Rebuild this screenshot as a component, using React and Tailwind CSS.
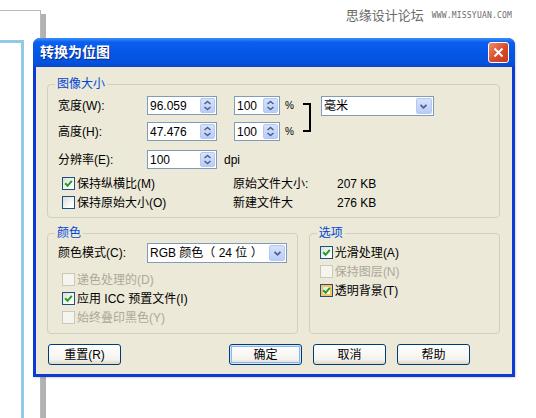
import React from "react";

const font = "font-['Liberation_Sans','Noto_Sans_CJK_SC',sans-serif]";

function Check({ checked, disabled, hover }) {
  return (
    <span
      className={`flex h-[13px] w-[13px] shrink-0 items-center justify-center border ${
        disabled
          ? "border-[#cac8bb] bg-[#f5f4ef]"
          : "border-[#1c5180] bg-[linear-gradient(135deg,#dcdcd7,#ffffff_80%)]"
      } ${hover ? "shadow-[inset_0_0_0_2px_#f9c55a] bg-[#fdf3c9]" : ""}`}
    >
      {checked && (
        <svg width="9" height="9" viewBox="0 0 9 9">
          <path d="M1.2 4.3 L3.6 6.8 L7.8 1.8" stroke="#21a121" strokeWidth="2" fill="none" />
        </svg>
      )}
    </span>
  );
}

function CheckRow({ label, hot, checked, disabled, hover }) {
  return (
    <div className="flex h-[19px] items-center gap-[2px]">
      <Check checked={checked} disabled={disabled} hover={hover} />
      <span className={disabled ? "text-[#aca899]" : "text-black"}>
        {label}
        <span>{hot}</span>
      </span>
    </div>
  );
}

function Spin() {
  return (
    <span className="flex h-[15px] w-[15px] items-center justify-center rounded-[2px] border border-[#b6c8f2] bg-[linear-gradient(180deg,#d6e2fd,#b9cdfa)]">
      <svg width="9" height="11" viewBox="0 0 9 11">
        <path d="M1.5 4 L4.5 1.5 L7.5 4" stroke="#4d6185" strokeWidth="1.6" fill="none" />
        <path d="M1.5 7 L4.5 9.5 L7.5 7" stroke="#4d6185" strokeWidth="1.6" fill="none" />
      </svg>
    </span>
  );
}

function Num({ value, w }) {
  return (
    <div className={`flex h-[19px] ${w} items-center justify-between border border-[#7f9db9] bg-white pl-[2px] pr-px`}>
      <span>{value}</span>
      <Spin />
    </div>
  );
}

function Select({ value, w }) {
  return (
    <div className={`flex h-[20px] ${w} items-center justify-between border border-[#7f9db9] bg-white pl-[2px] pr-px`}>
      <span>{value}</span>
      <span className="flex h-[16px] w-[16px] items-center justify-center rounded-[2px] border border-[#b6c8f2] bg-[linear-gradient(180deg,#d6e2fd,#b9cdfa)]">
        <svg width="9" height="7" viewBox="0 0 9 7">
          <path d="M1.5 1.8 L4.5 4.8 L7.5 1.8" stroke="#4d6185" strokeWidth="1.8" fill="none" />
        </svg>
      </span>
    </div>
  );
}

function Btn({ children, def }) {
  return (
    <button
      className={`h-[21px] w-[73px] rounded-[3px] border border-[#003c74] bg-[linear-gradient(180deg,#ffffff,#f4f3ee_75%,#dcd8cc)] text-[12px] text-black ${
        def ? "shadow-[inset_0_0_0_1px_#cee7ff,inset_0_0_0_2px_#8fb3ea]" : ""
      }`}
    >
      {children}
    </button>
  );
}

function Legend({ children }) {
  return <legend className="ml-[7px] px-[2px] leading-[16px] text-[#0046d5]">{children}</legend>;
}

export default function App() {
  return (
    <div className={`relative h-[418px] w-[536px] overflow-hidden bg-white text-[12px] ${font}`}>
      {/* page behind the dialog */}
      <div className="absolute left-[-1px] top-[10px] h-[420px] w-[42px] border-r border-t border-[#b9b9b9]" />
      <div className="absolute left-[41px] top-[14px] h-[410px] w-[5px] bg-[#b2b2b2]" />
      <div className="absolute left-[-3px] top-[40px] h-[390px] w-[27px] border-[3px] border-[#8fcbe4]" />

      <div className="absolute right-[24px] top-[6px] flex items-center gap-[8px] text-[#6b6b6b]">
        <span className="text-[13px]">思缘设计论坛</span>
        <span className="font-['DejaVu_Sans_Mono',monospace] text-[8px] tracking-[0.2px]">WWW.MISSYUAN.COM</span>
      </div>

      {/* dialog window */}
      <div className="absolute left-[33px] top-[38px] flex h-[339px] w-[482px] flex-col overflow-hidden rounded-t-[7px] bg-[#0b3ad4] shadow-[1px_1px_2px_rgba(0,0,0,0.15)]">
        <div className="flex h-[29px] shrink-0 items-center justify-between bg-[linear-gradient(180deg,#3e91fb_0%,#0a5fef_14%,#0556e6_55%,#0452de_85%,#0a47c6_100%)] pl-[7px] pr-[6px]">
          <span className="text-[14px] font-bold text-white [text-shadow:1px_1px_0_#0b2a85]">转换为位图</span>
          <span className="flex h-[21px] w-[21px] items-center justify-center rounded-[3px] border border-white bg-[linear-gradient(135deg,#ec8f6f,#d9482a_55%,#c53b1e)]">
            <svg width="11" height="11" viewBox="0 0 11 11">
              <path d="M1.5 1.5 L9.5 9.5 M9.5 1.5 L1.5 9.5" stroke="#ffffff" strokeWidth="2" />
            </svg>
          </span>
        </div>

        <div className="mx-[3px] mb-[3px] flex flex-1 flex-col bg-[#ece9d8] pl-[11px] pr-[12px] pt-[9px] text-black">
          {/* 图像大小 */}
          <fieldset className="h-[142px] rounded-[4px] border border-[#d0d0bf]">
            <Legend>图像大小</Legend>
            <div className="flex flex-col pl-[10px]">
              <div className="mt-[4px] flex">
                <div className="flex flex-col gap-[7px]">
                  <div className="flex h-[19px] items-center">
                    <span className="w-[89px]">宽度(W):</span>
                    <Num value="96.059" w="w-[70px]" />
                    <div className="ml-[17px]">
                      <Num value="100" w="w-[46px]" />
                    </div>
                    <span className="ml-[5px] text-[10px]">%</span>
                  </div>
                  <div className="flex h-[19px] items-center">
                    <span className="w-[89px]">高度(H):</span>
                    <Num value="47.476" w="w-[70px]" />
                    <div className="ml-[17px]">
                      <Num value="100" w="w-[46px]" />
                    </div>
                    <span className="ml-[5px] text-[10px]">%</span>
                  </div>
                </div>
                <div className="ml-[9px] mt-[7px] h-[29px] w-[8px] border-b-2 border-r-2 border-t-2 border-black" />
                <div className="ml-[10px]">
                  <Select value="毫米" w="w-[113px]" />
                </div>
              </div>

              <div className="mt-[9px] flex h-[19px] items-center">
                <span className="w-[89px]">分辨率(E):</span>
                <Num value="100" w="w-[70px]" />
                <span className="ml-[7px]">dpi</span>
              </div>

              <div className="mt-[5px] flex items-center">
                <div className="w-[175px] pl-[4px]">
                  <CheckRow label="保持纵横比" hot="(M)" checked />
                </div>
                <span className="w-[104px]">原始文件大小:</span>
                <span>207 KB</span>
              </div>
              <div className="flex items-center">
                <div className="w-[175px] pl-[4px]">
                  <CheckRow label="保持原始大小" hot="(O)" />
                </div>
                <span className="w-[104px]">新建文件大</span>
                <span>276 KB</span>
              </div>
            </div>
          </fieldset>

          <div className="mt-[7px] flex gap-[11px]">
            {/* 颜色 */}
            <fieldset className="h-[109px] w-[252px] rounded-[4px] border border-[#d0d0bf]">
              <Legend>颜色</Legend>
              <div className="flex flex-col pl-[10px]">
                <div className="mt-[2px] flex items-center">
                  <span className="w-[89px]">颜色模式(C):</span>
                  <Select value="RGB 颜色（ 24 位 ）" w="w-[140px]" />
                </div>
                <div className="mt-[7px] flex flex-col pl-[4px]">
                  <CheckRow label="递色处理的" hot="(D)" disabled />
                  <CheckRow label="应用 ICC 预置文件" hot="(I)" checked />
                  <CheckRow label="始终叠印黑色" hot="(Y)" disabled />
                </div>
              </div>
            </fieldset>

            {/* 选项 */}
            <fieldset className="h-[109px] w-[192px] rounded-[4px] border border-[#d0d0bf]">
              <Legend>选项</Legend>
              <div className="mt-[2px] flex flex-col pl-[10px]">
                <CheckRow label="光滑处理" hot="(A)" checked />
                <CheckRow label="保持图层" hot="(N)" disabled />
                <CheckRow label="透明背景" hot="(T)" checked hover />
              </div>
            </fieldset>
          </div>

          <div className="mt-[10px] flex items-center pl-px pr-[30px]">
            <Btn>重置(R)</Btn>
            <div className="flex-1" />
            <div className="flex gap-[11px]">
              <Btn def>确定</Btn>
              <Btn>取消</Btn>
              <Btn>帮助</Btn>
            </div>
          </div>
        </div>
      </div>
    </div>
  );
}
